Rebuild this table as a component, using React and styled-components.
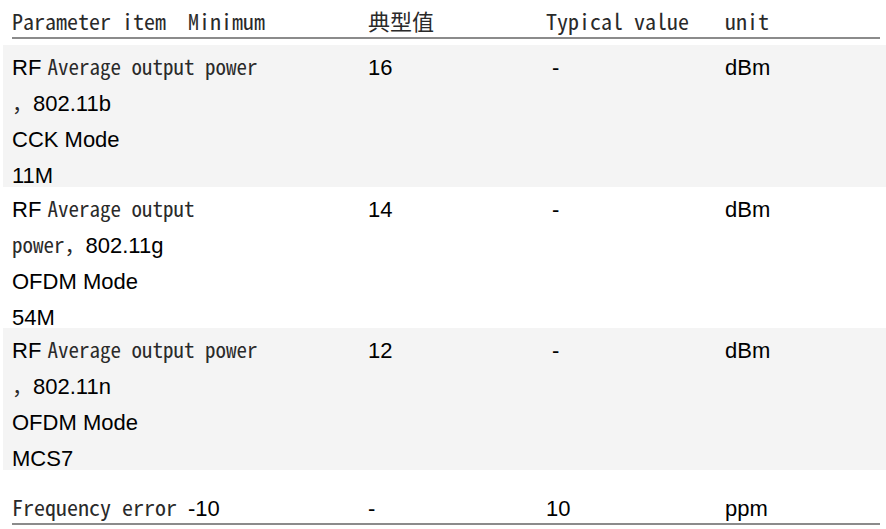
import styled, { createGlobalStyle } from "styled-components";

const GlobalStyle = createGlobalStyle`
  body {
    margin: 0;
    background: #ffffff;
    color: #000000;
    font-family: "Liberation Sans", Arial, sans-serif;
    font-size: 22px;
  }
`;

const MONO = `"Noto Sans Mono CJK SC", "Liberation Mono", "Noto Sans CJK SC", monospace`;

const Table = styled.div`
  display: flex;
  flex-direction: column;
  padding-left: 3px;
  width: 883px;
`;

const HeaderRow = styled.div`
  display: grid;
  grid-template-columns: 356px 178px 179px 1fr;
  margin: 0 6px 6px 9px;
  padding-top: 4px;
  border-bottom: 2px solid #8b8b8b;
  font-family: ${MONO};
  font-size: 22px;
  line-height: 33px;
  color: #2a2a2a;
  white-space: pre;
`;

const Row = styled.div`
  display: grid;
  grid-template-columns: 356px 178px 179px 1fr;
  box-sizing: border-box;
  height: ${(p) => p.$height}px;
  padding: 5px 0 0 9px;
  background: ${(p) => (p.$shaded ? "#f4f4f4" : "#ffffff")};
  line-height: 36px;
`;

const LastRow = styled.div`
  display: grid;
  grid-template-columns: 356px 178px 179px 1fr;
  margin: 0 6px 0 9px;
  padding-top: 25px;
  border-bottom: 2px solid #8b8b8b;
  line-height: 28px;
`;

const Cell = styled.div`
  white-space: pre;
`;

const Line = styled.div`
  white-space: pre;
`;

const Mono = styled.span`
  font-family: ${MONO};
  font-size: ${(p) => p.$size || 21}px;
  line-height: 1;
  color: #2a2a2a;
`;

const rows = [
  {
    lines: [
      <>RF <Mono>Average output power</Mono></>,
      <><Mono>，</Mono>802.11b</>,
      "CCK Mode",
      "11M",
    ],
    typ: "16",
    unit: "dBm",
    height: 142,
    shaded: true,
  },
  {
    lines: [
      <>RF <Mono>Average output</Mono></>,
      <><Mono>power，</Mono>802.11g</>,
      "OFDM Mode",
      "54M",
    ],
    typ: "14",
    unit: "dBm",
    height: 141,
    shaded: false,
  },
  {
    lines: [
      <>RF <Mono>Average output power</Mono></>,
      <><Mono>，</Mono>802.11n</>,
      "OFDM Mode",
      "MCS7",
    ],
    typ: "12",
    unit: "dBm",
    height: 142,
    shaded: true,
  },
];

export default function App() {
  return (
    <>
      <GlobalStyle />
      <Table>
        <HeaderRow>
          <Cell>Parameter item  Minimum</Cell>
          <Cell>典型值</Cell>
          <Cell>Typical value</Cell>
          <Cell>unit</Cell>
        </HeaderRow>
        {rows.map((r, i) => (
          <Row key={i} $height={r.height} $shaded={r.shaded}>
            <Cell>
              {r.lines.map((l, j) => (
                <Line key={j}>{l}</Line>
              ))}
            </Cell>
            <Cell>{r.typ}</Cell>
            <Cell> -</Cell>
            <Cell>{r.unit}</Cell>
          </Row>
        ))}
        <LastRow>
          <Cell><Mono $size={22}>Frequency error </Mono>-10</Cell>
          <Cell>-</Cell>
          <Cell>10</Cell>
          <Cell>ppm</Cell>
        </LastRow>
      </Table>
    </>
  );
}
